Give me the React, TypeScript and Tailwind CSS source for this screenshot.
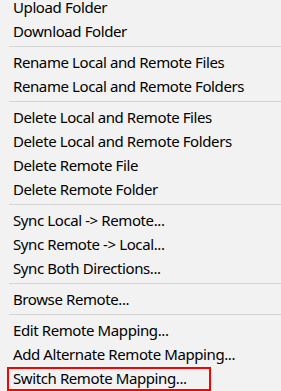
import React from "react"

type Entry = { label: string; highlight?: boolean } | "sep"

const entries: Entry[] = [
    { label: "Upload Folder" },
    { label: "Download Folder" },
    "sep",
    { label: "Rename Local and Remote Files" },
    { label: "Rename Local and Remote Folders" },
    "sep",
    { label: "Delete Local and Remote Files" },
    { label: "Delete Local and Remote Folders" },
    { label: "Delete Remote File" },
    { label: "Delete Remote Folder" },
    "sep",
    { label: "Sync Local -> Remote..." },
    { label: "Sync Remote -> Local..." },
    { label: "Sync Both Directions..." },
    "sep",
    { label: "Browse Remote..." },
    "sep",
    { label: "Edit Remote Mapping..." },
    { label: "Add Alternate Remote Mapping..." },
    { label: "Switch Remote Mapping...", highlight: true },
]

const App = () => {
    return (
        <div className="w-[281px] h-[391px] overflow-hidden bg-[#f2f2f2] font-['Noto_Sans',sans-serif] text-[15px] tracking-[-0.4px] text-black">
            <div className="-mt-[5px] flex flex-col">
                {entries.map((e, i) =>
                    e === "sep" ? (
                        <div key={i} className="h-[7px] pl-[9px] pt-[3px]">
                            <div className="h-px bg-[#d4d4d4]" />
                        </div>
                    ) : (
                        <div key={i} className="relative h-[24px] flex items-center pl-[13px] leading-none">
                            <span>{e.label}</span>
                            {e.highlight && (
                                <div className="absolute left-[7px] top-px w-[204px] h-[24px] border-2 border-[#ff0000]" />
                            )}
                        </div>
                    )
                )}
            </div>
        </div>
    )
}

export default App
